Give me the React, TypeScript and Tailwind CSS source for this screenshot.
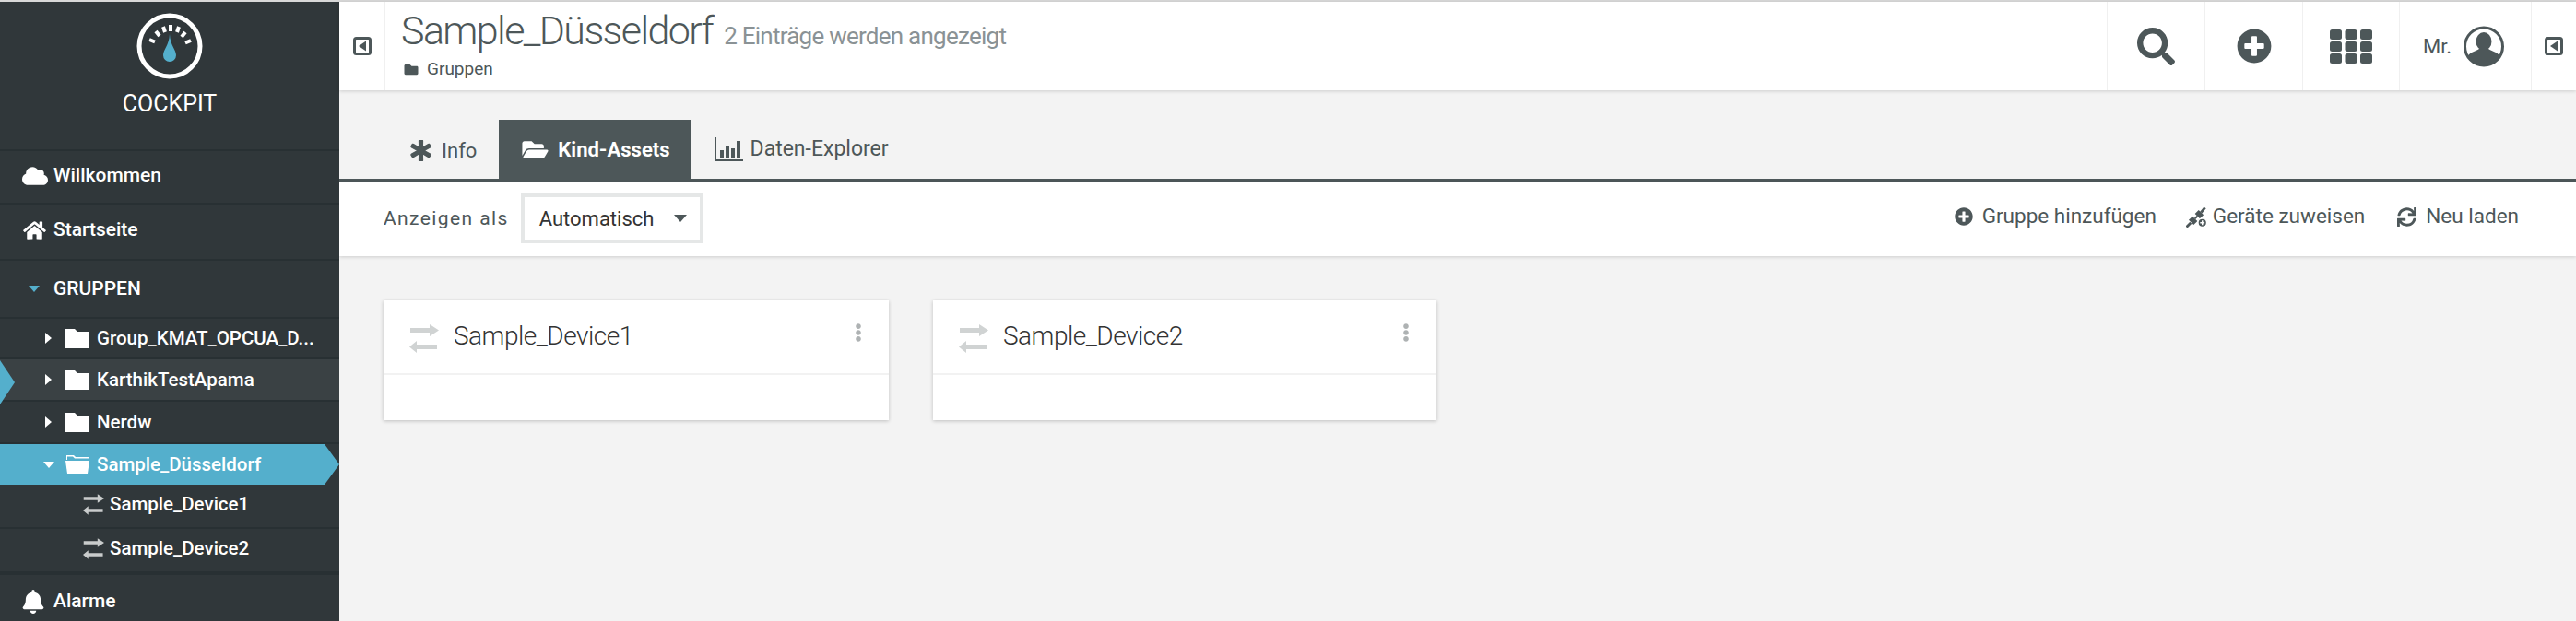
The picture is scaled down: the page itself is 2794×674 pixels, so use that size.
import React from "react";
import {
  FaAsterisk,
  FaBell,
  FaCloud,
  FaEllipsisV,
  FaFolder,
  FaFolderOpen,
  FaHome,
  FaPlusCircle,
  FaSearch,
  FaSync,
} from "react-icons/fa";

function Gauge() {
  return (
    <svg viewBox="0 0 72 72" className="w-[72px] h-[72px]">
      <circle cx="36" cy="36" r="33" fill="none" stroke="#fff" strokeWidth="5" />
      <g stroke="#fff" strokeWidth="4">
        <line x1="14" y1="29" x2="20" y2="31.5" />
        <line x1="21" y1="20" x2="25" y2="25" />
        <line x1="29" y1="15" x2="31" y2="21" />
        <line x1="37" y1="13" x2="37" y2="20" />
        <line x1="46" y1="15" x2="44" y2="21" />
        <line x1="53" y1="21" x2="49" y2="26" />
        <line x1="59" y1="30" x2="53" y2="32.5" />
      </g>
      <path d="M36 23 C36.5 35 43 40 43 46 A7 7 0 0 1 29 46 C29 40 35.5 35 36 23 Z" fill="#54afcc" />
    </svg>
  );
}

function Exchange({ className }: { className: string }) {
  return (
    <svg viewBox="0 0 32 31" className={className} fill="currentColor">
      <path d="M1 4H22V0L32 6.5L22 13V9H1Z" />
      <path d="M30 22H8V18L0 24.5L8 31V27H30Z" />
    </svg>
  );
}

function ToggleBox({ className }: { className: string }) {
  return (
    <svg viewBox="0 0 20 20" className={className}>
      <rect x="1.5" y="1.5" width="17" height="17" rx="2" fill="none" stroke="#4d5759" strokeWidth="3" />
      <path d="M14 4.5V15.5L6 10Z" fill="#4d5759" />
    </svg>
  );
}

function Folder() {
  return (
    <svg viewBox="0 0 26 21" className="w-[26px] h-[21px]" fill="#fff">
      <path d="M0 0H10L13 3H26V21H0Z" />
    </svg>
  );
}

function OpenFolder() {
  return (
    <svg viewBox="0 0 26 20" className="w-[26px] h-[20px]" fill="#fff">
      <path d="M1 0H9L11 2H25V3.5H10L8 1.5H2V5H1Z" />
      <path d="M0 6H26L24 20H2Z" />
    </svg>
  );
}

function BarChart() {
  return (
    <svg viewBox="0 0 31 26" className="w-[31px] h-[26px]" fill="#4d5759">
      <path d="M0 0H2V24H31V26H0Z" />
      <path d="M6 14H10V22H6ZM12 9H16V22H12ZM18 12H22V22H18ZM24 4H28V22H24Z" />
    </svg>
  );
}

function Grid() {
  return (
    <svg viewBox="0 0 46 37" className="w-[46px] h-[37px]" fill="#4d5759">
      {[0, 13, 26].map((y) =>
        [0, 16.5, 33].map((x) => <rect key={`${x}-${y}`} x={x} y={y} width="13" height="11" rx="2.5" />)
      )}
    </svg>
  );
}

function Avatar() {
  return (
    <svg viewBox="0 0 44 45" className="w-[44px] h-[45px]">
      <circle cx="22" cy="22.5" r="20.5" fill="#fff" stroke="#4d5759" strokeWidth="3" />
      <ellipse cx="22" cy="17" rx="8.5" ry="10" fill="#4d5759" />
      <path d="M4.5 33C8 28 13 28 17 25H27C31 28 36 28 39.5 33C35.5 40 29 43.5 22 43.5C15 43.5 8.5 40 4.5 33Z" fill="#4d5759" />
    </svg>
  );
}

function PlugPlus() {
  return (
    <svg viewBox="0 0 24 24" className="w-[23px] h-[23px]" fill="#4d5759">
      <path d="M12.900 16.700L7.300 11.100L3.100 15.300L8.700 20.900Z" />
      <path d="M19.900 9.700L14.300 4.100L10.100 8.300L15.700 13.900Z" />
      <path d="M0.500 23.500L5.500 18.500" stroke="#4d5759" strokeWidth="3" />
      <path d="M17 7L21.500 1.500" stroke="#4d5759" strokeWidth="3" />
      <path d="M10 14L13 11" stroke="#4d5759" strokeWidth="2" />
      <circle cx="18.500" cy="18.500" r="5" stroke="#fff" strokeWidth="1.500" />
      <path d="M18.500 16V21M16 18.500H21" stroke="#fff" strokeWidth="1.500" />
    </svg>
  );
}

function SideRow({
  h,
  icon,
  label,
  pb,
}: {
  h: string;
  icon: React.ReactNode;
  label: string;
  pb: string;
}) {
  return (
    <div className={`${h} ${pb} flex items-center pl-6 border-b-2 border-[#283033]`}>
      <span className="w-[34px] flex justify-start">{icon}</span>
      <span className="text-[21px] font-medium">{label}</span>
    </div>
  );
}

function TreeRow({ label, h, bg }: { label: string; h: string; bg?: string }) {
  return (
    <div className={`${h} ${bg ?? ""} flex items-center pl-[49px] border-b-2 border-[#283033]`}>
      <span className="w-0 h-0 border-y-[6px] border-y-transparent border-l-[7px] border-l-white" />
      <span className="ml-[15px]">
        <Folder />
      </span>
      <span className="ml-2 text-[20.5px] font-medium whitespace-nowrap">{label}</span>
    </div>
  );
}

function DeviceRow({ label, h }: { label: string; h: string }) {
  return (
    <div className={`${h} pb-[4px] flex items-center pl-[90px] border-b-2 border-[#283033]`}>
      <Exchange className="w-[23px] h-[23px] text-[#c9cccc]" />
      <span className="ml-[6px] text-[20.5px] font-medium">{label}</span>
    </div>
  );
}

function Card({ label, width }: { label: string; width: string }) {
  return (
    <div className={`${width} h-[130px] bg-white shadow-[0_1px_4px_rgba(0,0,0,0.22)]`}>
      <div className="h-[81px] flex items-start pl-[28px] pr-[29px] border-b-2 border-[#f2f2f2]">
        <Exchange className="w-[32px] h-[31px] mt-[26px] text-[#d0d3d3]" />
        <span className="ml-[16px] mt-[18px] text-[28px] tracking-[-0.5px] font-light text-[#333]">{label}</span>
        <FaEllipsisV className="ml-auto mt-[25px] w-[8px] h-[20px] text-[#aeb2b3]" />
      </div>
    </div>
  );
}

export default function App() {
  return (
    <div
      className="w-[2794px] h-[674px] overflow-hidden flex flex-col bg-[#f3f3f3]"
      style={{ fontFamily: "Roboto, sans-serif" }}
    >
      <div className="h-[2px] bg-[#d8d8d8]" />
      <div className="flex flex-1 min-h-0">
        {/* Sidebar */}
        <aside className="relative w-[368px] shrink-0 bg-[#30373a] text-white flex flex-col">
          <div className="h-[162px] flex flex-col items-center pt-[12px] border-b-2 border-[#283033]">
            <Gauge />
            <span className="mt-[11px] text-[25px] font-normal leading-[32px]">COCKPIT</span>
          </div>
          <SideRow
            h="h-[58px]"
            pb="pb-[3px]"
            icon={<FaCloud className="w-[28px] h-[26px]" />}
            label="Willkommen"
          />
          <SideRow
            h="h-[61px]"
            pb="pb-[3px]"
            icon={<FaHome className="w-[25px] h-[22px] ml-[1px]" />}
            label="Startseite"
          />
          <SideRow
            h="h-[63px]"
            pb="pb-0"
            icon={
              <span className="ml-[7px] w-0 h-0 border-x-[6px] border-x-transparent border-t-[7px] border-t-[#54afcc]" />
            }
            label="GRUPPEN"
          />
          <TreeRow h="h-[44px]" label="Group_KMAT_OPCUA_D..." />
          <TreeRow h="h-[46px]" bg="bg-[#3a4144]" label="KarthikTestApama" />
          <TreeRow h="h-[46px]" label="Nerdw" />
          <div className="h-[44px] flex items-center pl-[47px] bg-[#54afcc] [clip-path:polygon(0_0,352px_0,100%_50%,352px_100%,0_100%)]">
            <span className="w-0 h-0 border-x-[6px] border-x-transparent border-t-[7px] border-t-white" />
            <span className="ml-[12px]">
              <OpenFolder />
            </span>
            <span className="ml-2 text-[20.5px] font-medium">Sample_Düsseldorf</span>
          </div>
          <DeviceRow h="h-[47px] mt-[1px]" label="Sample_Device1" />
          <DeviceRow h="h-[48px]" label="Sample_Device2" />
          <div className="h-[4px] bg-[#283033] -mt-[2px]" />
          <div className="flex-1 flex items-center pl-6 pt-2">
            <span className="w-[34px]">
              <FaBell className="w-[24px] h-[26px]" />
            </span>
            <span className="text-[21px] font-medium">Alarme</span>
          </div>
          {/* marker on the hovered row */}
          <div className="absolute left-0 top-[389px] w-[16px] h-[48px] bg-[#54afcc] [clip-path:polygon(0_0,100%_50%,0_100%)]" />
        </aside>

        <main className="flex-1 min-w-0 flex flex-col">
          {/* Header */}
          <header className="h-[96px] bg-white shadow-[0_1px_4px_rgba(0,0,0,0.16)] flex items-stretch z-10">
            <div className="w-[50px] flex items-center justify-center border-r border-[#f0f0f0]">
              <ToggleBox className="w-[20px] h-[20px]" />
            </div>
            <div className="flex-1 pl-[17px] pt-[2px]">
              <div className="flex items-baseline whitespace-nowrap">
                <span className="text-[43px] tracking-[-1.6px] font-light leading-[58px] text-[#4d5759]">
                  Sample_Düsseldorf
                </span>
                <span className="ml-[12px] text-[26px] tracking-[-0.75px] font-normal text-[#8a9295]">
                  2 Einträge werden angezeigt
                </span>
              </div>
              <div className="flex items-center mt-[2px] text-[#4d5759]">
                <FaFolder className="w-[18px] h-[15px] ml-[2px]" />
                <span className="ml-2 text-[19px] leading-[22px]">Gruppen</span>
              </div>
            </div>
            <div className="w-[106px] flex items-center justify-center border-l border-[#f0f0f0]">
              <FaSearch className="w-[41px] h-[41px] text-[#4d5759]" />
            </div>
            <div className="w-[106px] flex items-center justify-center border-l border-[#f0f0f0]">
              <FaPlusCircle className="w-[38px] h-[38px] text-[#4d5759]" />
            </div>
            <div className="w-[105px] flex items-center justify-center border-l border-[#f0f0f0]">
              <Grid />
            </div>
            <div className="w-[143px] flex items-center pl-[25px] border-l border-[#f0f0f0]">
              <span className="text-[22px] text-[#4d5759] mr-[13px]">Mr.</span>
              <Avatar />
            </div>
            <div className="w-[49px] flex items-center justify-center border-l border-[#f0f0f0]">
              <ToggleBox className="w-[20px] h-[20px]" />
            </div>
          </header>

          {/* Tabs */}
          <nav className="h-[96px] flex items-end pl-[52px] text-[#4d5759]">
            <div className="h-[64px] flex items-center pl-[25px] pr-[24px] pt-[2px]">
              <FaAsterisk className="w-[23px] h-[23px]" stroke="currentColor" strokeWidth={30} />
              <span className="ml-[11px] text-[22px] font-normal">Info</span>
            </div>
            <div className="h-[64px] flex items-center pl-[25px] pr-[23px] bg-[#4d5759] text-white">
              <FaFolderOpen className="w-[29px] h-[25px]" />
              <span className="ml-[10px] text-[22px] font-bold">Kind-Assets</span>
            </div>
            <div className="h-[64px] flex items-center pl-[25px] pr-[25px]">
              <BarChart />
              <span className="ml-2 text-[23px]">Daten-Explorer</span>
            </div>
          </nav>
          <div className="h-[4px] bg-[#4d5759]" />

          {/* Toolbar */}
          <div className="h-[80px] bg-white shadow-[0_1px_4px_rgba(0,0,0,0.16)] flex items-center pl-[48px] pr-[62px] text-[#4d5759]">
            <span className="text-[21px] tracking-[1.4px]">Anzeigen als</span>
            <div className="ml-[13px] w-[198px] h-[54px] border-4 border-[#e5e7e7] flex items-center pl-[16px] pr-[14px] -mt-[2px]">
              <span className="text-[22px] text-[#333]">Automatisch</span>
              <span className="ml-auto w-0 h-0 border-x-[7px] border-x-transparent border-t-[8px] border-t-[#4d5759]" />
            </div>
            <div className="ml-auto flex items-center -mt-[6px]">
              <div className="flex items-center">
                <FaPlusCircle className="w-[20px] h-[20px]" />
                <span className="ml-[10px] text-[22.5px]">Gruppe hinzufügen</span>
              </div>
              <div className="flex items-center ml-[32px]">
                <PlugPlus />
                <span className="ml-[6px] text-[22.5px]">Geräte zuweisen</span>
              </div>
              <div className="flex items-center ml-[35px]">
                <FaSync className="w-[21px] h-[21px]" />
                <span className="ml-[10px] text-[22.5px]">Neu laden</span>
              </div>
            </div>
          </div>

          {/* Cards */}
          <section className="flex gap-[48px] pt-[48px] pl-[48px]">
            <Card label="Sample_Device1" width="w-[548px]" />
            <Card label="Sample_Device2" width="w-[546px]" />
          </section>
        </main>
      </div>
    </div>
  );
}
